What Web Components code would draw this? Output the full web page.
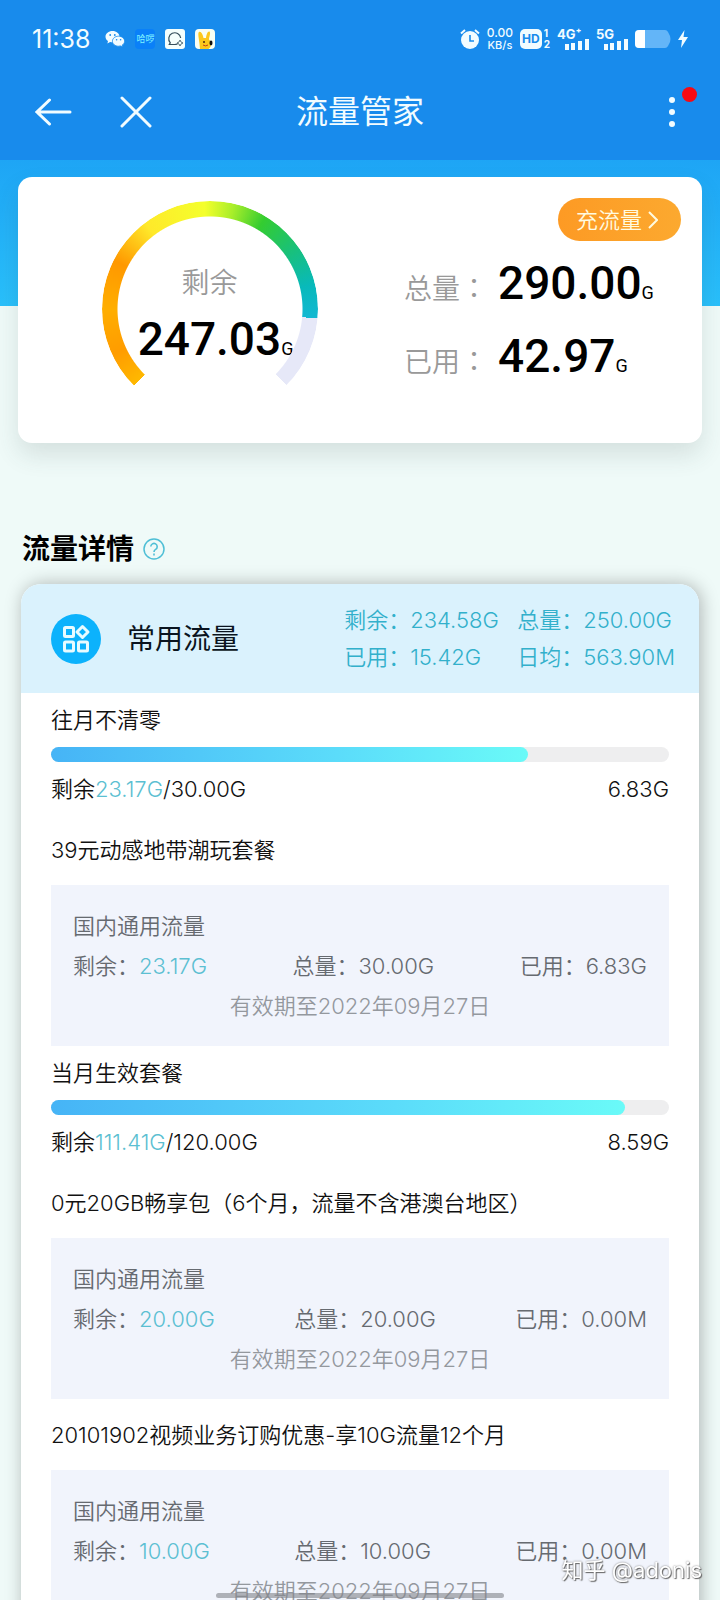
<!DOCTYPE html>
<html lang="zh-CN">
<head>
<meta charset="utf-8">
<meta name="viewport" content="width=device-width, initial-scale=1">
<title>流量管家</title>
<style>
  body {
    margin: 0;
    font-family: Inter, "Noto Sans CJK SC", sans-serif;
    font-size: 22px;
    font-weight: 350;
    line-height: 28px;
    color: #111;
    background: #effaf8;
  }
</style>
</head>
<body>
<data-app></data-app>

<script>
class StatusBar extends HTMLElement {
  connectedCallback() {
    this.attachShadow({ mode: "open" });
    this.render();
  }

  render() {
    this.shadowRoot.innerHTML = `
      <style>
        :host {
          display: flex;
          align-items: center;
          justify-content: space-between;
          height: 50px;
          padding: 14px 32px 0;
          color: #f2fcff;
          font-weight: 400;
        }
        .left, .right { display: flex; align-items: center; }
        .left { gap: 10px; }
        .right { gap: 7px; }
        .time { font-size: 25px; margin-right: 5px; }
        .hello {
          width: 20px;
          font-size: 9px;
          line-height: 20px;
          text-align: center;
          white-space: nowrap;
          color: #7ff2ff;
          background: #0a80f8;
          border-radius: 4px;
        }
        .speed { font-size: 12px; line-height: 12px; text-align: center; font-weight: 500; }
        .speed span { display: block; }
        .speed .unit { font-size: 11px; }
        .hd { display: flex; align-items: center; gap: 2px; }
        .hd b {
          padding: 0 2px;
          font-size: 12px;
          line-height: 20px;
          color: #188bec;
          background: #f2fcff;
          border-radius: 5px;
        }
        .hd small { font-size: 10px; line-height: 11px; font-weight: 700; }
        .hd small span { display: block; }
        .sim { display: grid; width: 32px; font-size: 13px; font-weight: 700; line-height: 10px; }
        .sim svg { justify-self: end; }
        svg { display: block; }
      </style>
      <div class="left">
        <span class="time">11:38</span>
        <svg width="20" height="18" viewBox="0 0 20 18">
          <path d="M7.500 1C3.600 1 .5 3.500.5 6.700c0 1.800 1 3.300 2.500 4.400L2.400 13.400l2.700-1.400c.8.2 1.600.3 2.400.3 3.900 0 7-2.500 7-5.600S11.400 1 7.500 1z" fill="#f2fcff"/>
          <path d="M13.500 6.200c-3.400 0-6.100 2.200-6.100 5s2.700 5 6.100 5c.7 0 1.400-.1 2-.3l2.300 1.200-.6-2c1.400-.9 2.400-2.300 2.400-3.900 0-2.800-2.700-5-6.100-5z" fill="#f2fcff" stroke="#188bec" stroke-width=".8"/>
          <g fill="#188bec"><circle cx="5.200" cy="5" r=".9"/><circle cx="9.800" cy="5" r=".9"/><circle cx="11.600" cy="9.800" r=".8"/><circle cx="15.600" cy="9.800" r=".8"/></g>
        </svg>
        <span class="hello">哈啰</span>
        <svg width="20" height="20" viewBox="0 0 20 20">
          <rect width="20" height="20" rx="3" fill="#f4fffd"/>
          <path d="M12.500 14.900c-1 .4-1.900.6-2.900.6H4.300l1-1.700A6 6 0 1 1 15.700 9" fill="none" stroke="#35505c" stroke-width="1.200"/>
          <path d="M15 11l1 2 2 1-2 1-1 2-1-2-2-1 2-1z" fill="none" stroke="#35505c" stroke-width=".8"/>
        </svg>
        <svg width="20" height="20" viewBox="0 0 20 20">
          <rect width="20" height="20" rx="4" fill="#f8fff4"/>
          <path d="M5 20l-.6-6C4 10 2.500 4 4 3c2-1 4 3 4.500 6h2.500c.3-3 1.500-7 3.500-6.500 1.500 1.500-.5 6-.5 8 3 2 3 7-.5 9.500z" fill="#fcc81c"/>
          <circle cx="9" cy="13" r="1" fill="#4a2b10"/>
          <ellipse cx="16" cy="14" rx="1.500" ry="2.400" fill="#111"/>
          <path d="M8 16q2.500 1.800 5 0" fill="none" stroke="#c8401a" stroke-width="1"/>
        </svg>
      </div>
      <div class="right">
        <svg width="20" height="22" viewBox="0 0 20 22">
          <circle cx="10" cy="12" r="9" fill="#f2fcff"/>
          <path d="M1 5.500l4-3.500M19 5.500L15 2" stroke="#f2fcff" stroke-width="2"/>
          <path d="M10 7v6h4" fill="none" stroke="#188bec" stroke-width="1.600"/>
        </svg>
        <div class="speed"><span>0.00</span><span class="unit">KB/s</span></div>
        <div class="hd"><b>HD</b><small><span>1</span><span>2</span></small></div>
        <div class="sim">4G⁺
          <svg width="24" height="11" viewBox="0 0 24 11" fill="#f2fcff"><rect y="5" width="4" height="6"/><rect x="6" y="4" width="4" height="7"/><rect x="13" y="2" width="4" height="9"/><rect x="20" width="4" height="11"/></svg>
        </div>
        <div class="sim">5G
          <svg width="24" height="11" viewBox="0 0 24 11" fill="#f2fcff"><rect y="5" width="4" height="6"/><rect x="6" y="4" width="4" height="7"/><rect x="13" y="2" width="4" height="9"/><rect x="20" width="4" height="11"/></svg>
        </div>
        <svg width="36" height="18" viewBox="0 0 36 18">
          <path d="M4 0h26q2 0 3 2l2 4q1 3 0 6l-2 4q-1 2-3 2H4q-4 0-4-4V4q0-4 4-4z" fill="#63b5f8"/>
          <path d="M4 0h6v18H4q-4 0-4-4V4q0-4 4-4z" fill="#fff"/>
        </svg>
        <svg width="10" height="18" viewBox="0 0 10 18"><path d="M6.500 0L0 10h4l-1 8 7-11H5.500z" fill="#f2fcff"/></svg>
      </div>
    `;
  }
}

class NavBar extends HTMLElement {
  connectedCallback() {
    this.attachShadow({ mode: "open" });
    this.render();
  }

  render() {
    this.shadowRoot.innerHTML = `
      <style>
        :host {
          display: grid;
          grid-template-columns: 1fr auto 1fr;
          align-items: center;
          height: 96px;
          padding: 0 35px;
          color: #f2fcff;
        }
        h1 { margin: 0; font-size: 32px; line-height: 40px; font-weight: 400; }
        .side { display: flex; gap: 48px; }
        button { padding: 0; border: 0; background: none; color: inherit; }
        .more { position: relative; justify-self: end; width: 36px; }
        .badge {
          position: absolute;
          top: -9px;
          right: -12px;
          width: 15px;
          height: 15px;
          border-radius: 50%;
          background: #f50a14;
        }
        svg { display: block; fill: none; stroke: currentColor; stroke-width: 3; stroke-linecap: round; }
      </style>
      <div class="side">
        <button aria-label="返回"><svg width="37" height="32" viewBox="0 0 37 32"><path d="M2 16h33M14.500 4L2 16l12.500 12"/></svg></button>
        <button aria-label="关闭"><svg width="32" height="32" viewBox="0 0 32 32"><path d="M2 2l28 28M30 2L2 30"/></svg></button>
      </div>
      <h1><slot></slot></h1>
      <button class="more" aria-label="更多">
        <svg width="36" height="32" viewBox="0 0 36 32"><g fill="currentColor" stroke="none"><circle cx="23" cy="4" r="3"/><circle cx="23" cy="16" r="3"/><circle cx="23" cy="28" r="3"/></g></svg>
        <span class="badge"></span>
      </button>
    `;
  }
}

class UsageGauge extends HTMLElement {
  connectedCallback() {
    this.attachShadow({ mode: "open" });
    this.render();
  }

  render() {
    // the dial opens at the bottom, so a full scale is 270deg
    const end = this.getAttribute("percent") * 2.7;

    this.shadowRoot.innerHTML = `
      <style>
        :host { display: grid; width: 216px; height: 216px; }
        .ring, .text { grid-area: 1 / 1; }
        .ring {
          border-radius: 50%;
          background: conic-gradient(from 225deg,
            #ffb800 0deg, #ff9c00 20deg, #ffae00 45deg, #ff9800 72deg,
            #ffe92a 98deg, #f4ff2c 132deg, #a8ee2a 148deg, #34cc30 166deg,
            #18c07c 190deg, #08b9bb 212deg, #12b8d2 ${end}deg,
            #e6e8f8 ${end}deg 270deg, transparent 270deg);
          -webkit-mask: radial-gradient(closest-side, transparent 92px, #000 93px);
          mask: radial-gradient(closest-side, transparent 92px, #000 93px);
        }
        .text {
          display: flex;
          flex-direction: column;
          align-items: center;
          padding-top: 62px;
          white-space: nowrap;
        }
        .label { font-size: 28px; line-height: 40px; color: #999; }
        /* centre on the digits, the unit hangs out */
        big-number { margin-right: -12px; }
      </style>
      <div class="ring"></div>
      <div class="text">
        <span class="label"><slot></slot></span>
        <big-number value="${this.getAttribute("value")}"></big-number>
      </div>
    `;
  }
}

class BigNumber extends HTMLElement {
  connectedCallback() {
    this.attachShadow({ mode: "open" });
    this.shadowRoot.innerHTML = `
      <style>
        :host {
          display: block;
          font: 500 46px/73px Roboto, sans-serif;
          color: #000;
        }
        small { font-size: 18px; font-weight: 400; }
      </style>${this.getAttribute("value")}<small>G</small>`;
  }
}

class QuotaCard extends HTMLElement {
  connectedCallback() {
    this.attachShadow({ mode: "open" });
    this.render();
  }

  render() {
    this.shadowRoot.innerHTML = `
      <style>
        :host {
          display: block;
          padding: 17px 18px 0;
          background: linear-gradient(#1ea5f5, #29c0fb) no-repeat top / 100% 146px;
        }
        .card {
          display: grid;
          grid-template-columns: 56fr 44fr;
          min-height: 266px;
          box-sizing: border-box;
          background: #fff;
          border-radius: 14px;
          box-shadow: 0 12px 24px rgba(60, 80, 80, 0.14);
        }
        usage-gauge { justify-self: center; margin-top: 24px; }
        .stats { display: flex; flex-direction: column; padding-top: 21px; }
        a {
          display: flex;
          align-items: center;
          align-self: flex-end;
          gap: 6px;
          height: 43px;
          padding: 0 23px 0 18px;
          margin-right: 21px;
          border-radius: 22px;
          background: linear-gradient(90deg, #fd9a24, #fca92f);
          color: #fffbe0;
          text-decoration: none;
        }
        a svg { fill: none; stroke: currentColor; stroke-width: 2; }
        dl { margin: 6px 0 0 3px; }
        dl div { display: flex; align-items: baseline; gap: 10px; height: 73px; }
        dt { font-size: 28px; color: #999; white-space: nowrap; }
        dt span { font-family: "Noto Sans CJK TC", sans-serif; }
        dd { margin: 0; white-space: nowrap; }
      </style>
      <div class="card">
        <usage-gauge percent="85.2" value="247.03">剩余</usage-gauge>
        <div class="stats">
          <a href="#">充流量<svg width="10" height="18" viewBox="0 0 10 18"><path d="M1 1l8 8-8 8"/></svg></a>
          <dl>
            <div><dt>总量<span lang="zh-TW">：</span></dt><dd><big-number value="290.00"></big-number></dd></div>
            <div><dt>已用<span lang="zh-TW">：</span></dt><dd><big-number value="42.97"></big-number></dd></div>
          </dl>
        </div>
      </div>
    `;
  }
}

class PlanPanel extends HTMLElement {
  connectedCallback() {
    this.attachShadow({ mode: "open" });
    this.render();
  }

  render() {
    this.shadowRoot.innerHTML = `
      <style>
        :host {
          display: block;
          margin: 0 21px;
          border-radius: 20px 20px 0 0;
          background: #fff;
          box-shadow: 2px 0 18px rgba(0, 0, 0, 0.28);
        }
        header {
          display: flex;
          align-items: center;
          height: 109px;
          padding: 0 24px 0 30px;
          background: #daf2fd;
          border-radius: 20px 20px 0 0;
        }
        h3 { flex: 1; margin: 0 0 0 26px; font-size: 28px; font-weight: 400; color: #0a1420; }
        .totals {
          display: grid;
          grid-template-columns: 173px auto;
          line-height: 37px;
          color: #32b0cb;
          white-space: nowrap;
        }
        .body { padding: 0 30px; }
      </style>
      <header>
        <svg width="50" height="50" viewBox="0 0 50 50">
          <circle cx="25" cy="25" r="25" fill="#0cb2fc"/>
          <g fill="none" stroke="#e8fbff" stroke-width="3" stroke-linejoin="round">
            <rect x="13.500" y="13.500" width="9" height="9" rx="1"/>
            <path d="M31.500 12.500l5.500 5.500-5.500 5.500L26 18z"/>
            <rect x="13.500" y="28" width="9" height="9" rx="1"/>
            <rect x="27.500" y="28" width="9" height="9" rx="1"/>
          </g>
        </svg>
        <h3>${this.getAttribute("name")}</h3>
        <div class="totals">
          <span>剩余：234.58G</span><span>总量：250.00G</span>
          <span>已用：15.42G</span><span>日均：563.90M</span>
        </div>
      </header>
      <div class="body"><slot></slot></div>
    `;
  }
}

class UsageSection extends HTMLElement {
  connectedCallback() {
    this.attachShadow({ mode: "open" });
    this.render();
  }

  render() {
    const name = this.getAttribute("name");
    const left = this.getAttribute("left");
    const total = this.getAttribute("total");
    const percent = (parseFloat(left) / parseFloat(total)) * 100;

    this.shadowRoot.innerHTML = `
      <style>
        :host { display: block; padding-top: 13px; }
        h4 { margin: 0; font-size: inherit; font-weight: inherit; }
        .bar { height: 15px; margin: 13px 0; border-radius: 8px; background: #eeeeef; }
        .fill {
          width: ${percent}%;
          height: 100%;
          border-radius: 8px;
          background: linear-gradient(90deg, #46b4f6, #5bdcfa 60%, #6afaf8);
        }
        .row { display: flex; justify-content: space-between; padding-bottom: 11px; }
        .left { color: #5cbfd2; }
      </style>
      <h4>${name}</h4>
      <div class="bar" role="progressbar" aria-label="${name}" aria-valuenow="${Math.round(percent)}"><div class="fill"></div></div>
      <div class="row">
        <span>剩余<span class="left">${left}</span>/${total}</span>
        <span>${this.getAttribute("used")}</span>
      </div>
      <slot></slot>
    `;
  }
}

class PlanItem extends HTMLElement {
  connectedCallback() {
    this.attachShadow({ mode: "open" });
    this.render();
  }

  render() {
    this.shadowRoot.innerHTML = `
      <style>
        :host { display: block; padding-top: 22px; }
        h5 { margin: 0 0 21px; font-size: inherit; font-weight: inherit; white-space: nowrap; }
        .box {
          padding: 21px 22px 20px;
          line-height: 40px;
          color: #666a70;
          background: #f1f4fc;
        }
        .row { display: flex; justify-content: space-between; }
        .left { color: #5cbfd2; }
        .expire { text-align: center; color: #94989e; }
      </style>
      <h5>${this.getAttribute("name")}</h5>
      <div class="box">
        <div>国内通用流量</div>
        <div class="row">
          <span>剩余：<span class="left">${this.getAttribute("left")}</span></span>
          <span>总量：${this.getAttribute("total")}</span>
          <span>已用：${this.getAttribute("used")}</span>
        </div>
        <div class="expire">有效期至2022年09月27日</div>
      </div>
    `;
  }
}

class DataApp extends HTMLElement {
  connectedCallback() {
    this.attachShadow({ mode: "open" });
    this.render();
  }

  render() {
    this.shadowRoot.innerHTML = `
      <style>
        :host { display: block; height: 100vh; overflow: hidden; }
        .top { background: #188bec; }
        .heading { display: flex; align-items: center; gap: 9px; padding: 86px 22px 15px; }
        h2 { margin: 0; font-size: 28px; line-height: 40px; font-weight: 700; color: #000; }
        .heading button { padding: 0; border: 0; background: none; color: #4fbfd6; }
        .heading svg { display: block; fill: none; stroke: currentColor; stroke-width: 2; }
        .watermark {
          position: fixed;
          right: 18px;
          bottom: 16px;
          font-weight: 400;
          color: #fff;
          text-shadow: 1px 1px 1px #666, 0 0 2px #777;
        }
        .home {
          position: fixed;
          left: 30%;
          right: 30%;
          bottom: 2px;
          height: 5px;
          border-radius: 3px;
          background: rgba(130, 132, 138, 0.6);
        }
      </style>
      <div class="top">
        <status-bar></status-bar>
        <nav-bar>流量管家</nav-bar>
      </div>
      <quota-card></quota-card>
      <div class="heading">
        <h2>流量详情</h2>
        <button aria-label="说明">
          <svg width="22" height="22" viewBox="0 0 22 22"><circle cx="11" cy="11" r="10" stroke-width="1.500"/><path d="M7.800 8.600a3.200 3.200 0 1 1 4.800 2.800c-1.100.7-1.600 1.200-1.600 2.600M11 15.500v2" stroke-width="1.600"/></svg>
        </button>
      </div>
      <plan-panel name="常用流量">
        <usage-section name="往月不清零" left="23.17G" total="30.00G" used="6.83G">
          <plan-item name="39元动感地带潮玩套餐" left="23.17G" total="30.00G" used="6.83G"></plan-item>
        </usage-section>
        <usage-section name="当月生效套餐" left="111.41G" total="120.00G" used="8.59G">
          <plan-item name="0元20GB畅享包（6个月，流量不含港澳台地区）" left="20.00G" total="20.00G" used="0.00M"></plan-item>
          <plan-item name="20101902视频业务订购优惠-享10G流量12个月" left="10.00G" total="10.00G" used="0.00M"></plan-item>
        </usage-section>
      </plan-panel>
      <div class="watermark">知乎 @adonis</div>
      <div class="home"></div>
    `;
  }
}

customElements.define("status-bar", StatusBar);
customElements.define("nav-bar", NavBar);
customElements.define("big-number", BigNumber);
customElements.define("usage-gauge", UsageGauge);
customElements.define("quota-card", QuotaCard);
customElements.define("plan-item", PlanItem);
customElements.define("usage-section", UsageSection);
customElements.define("plan-panel", PlanPanel);
customElements.define("data-app", DataApp);
</script>
</body>
</html>
